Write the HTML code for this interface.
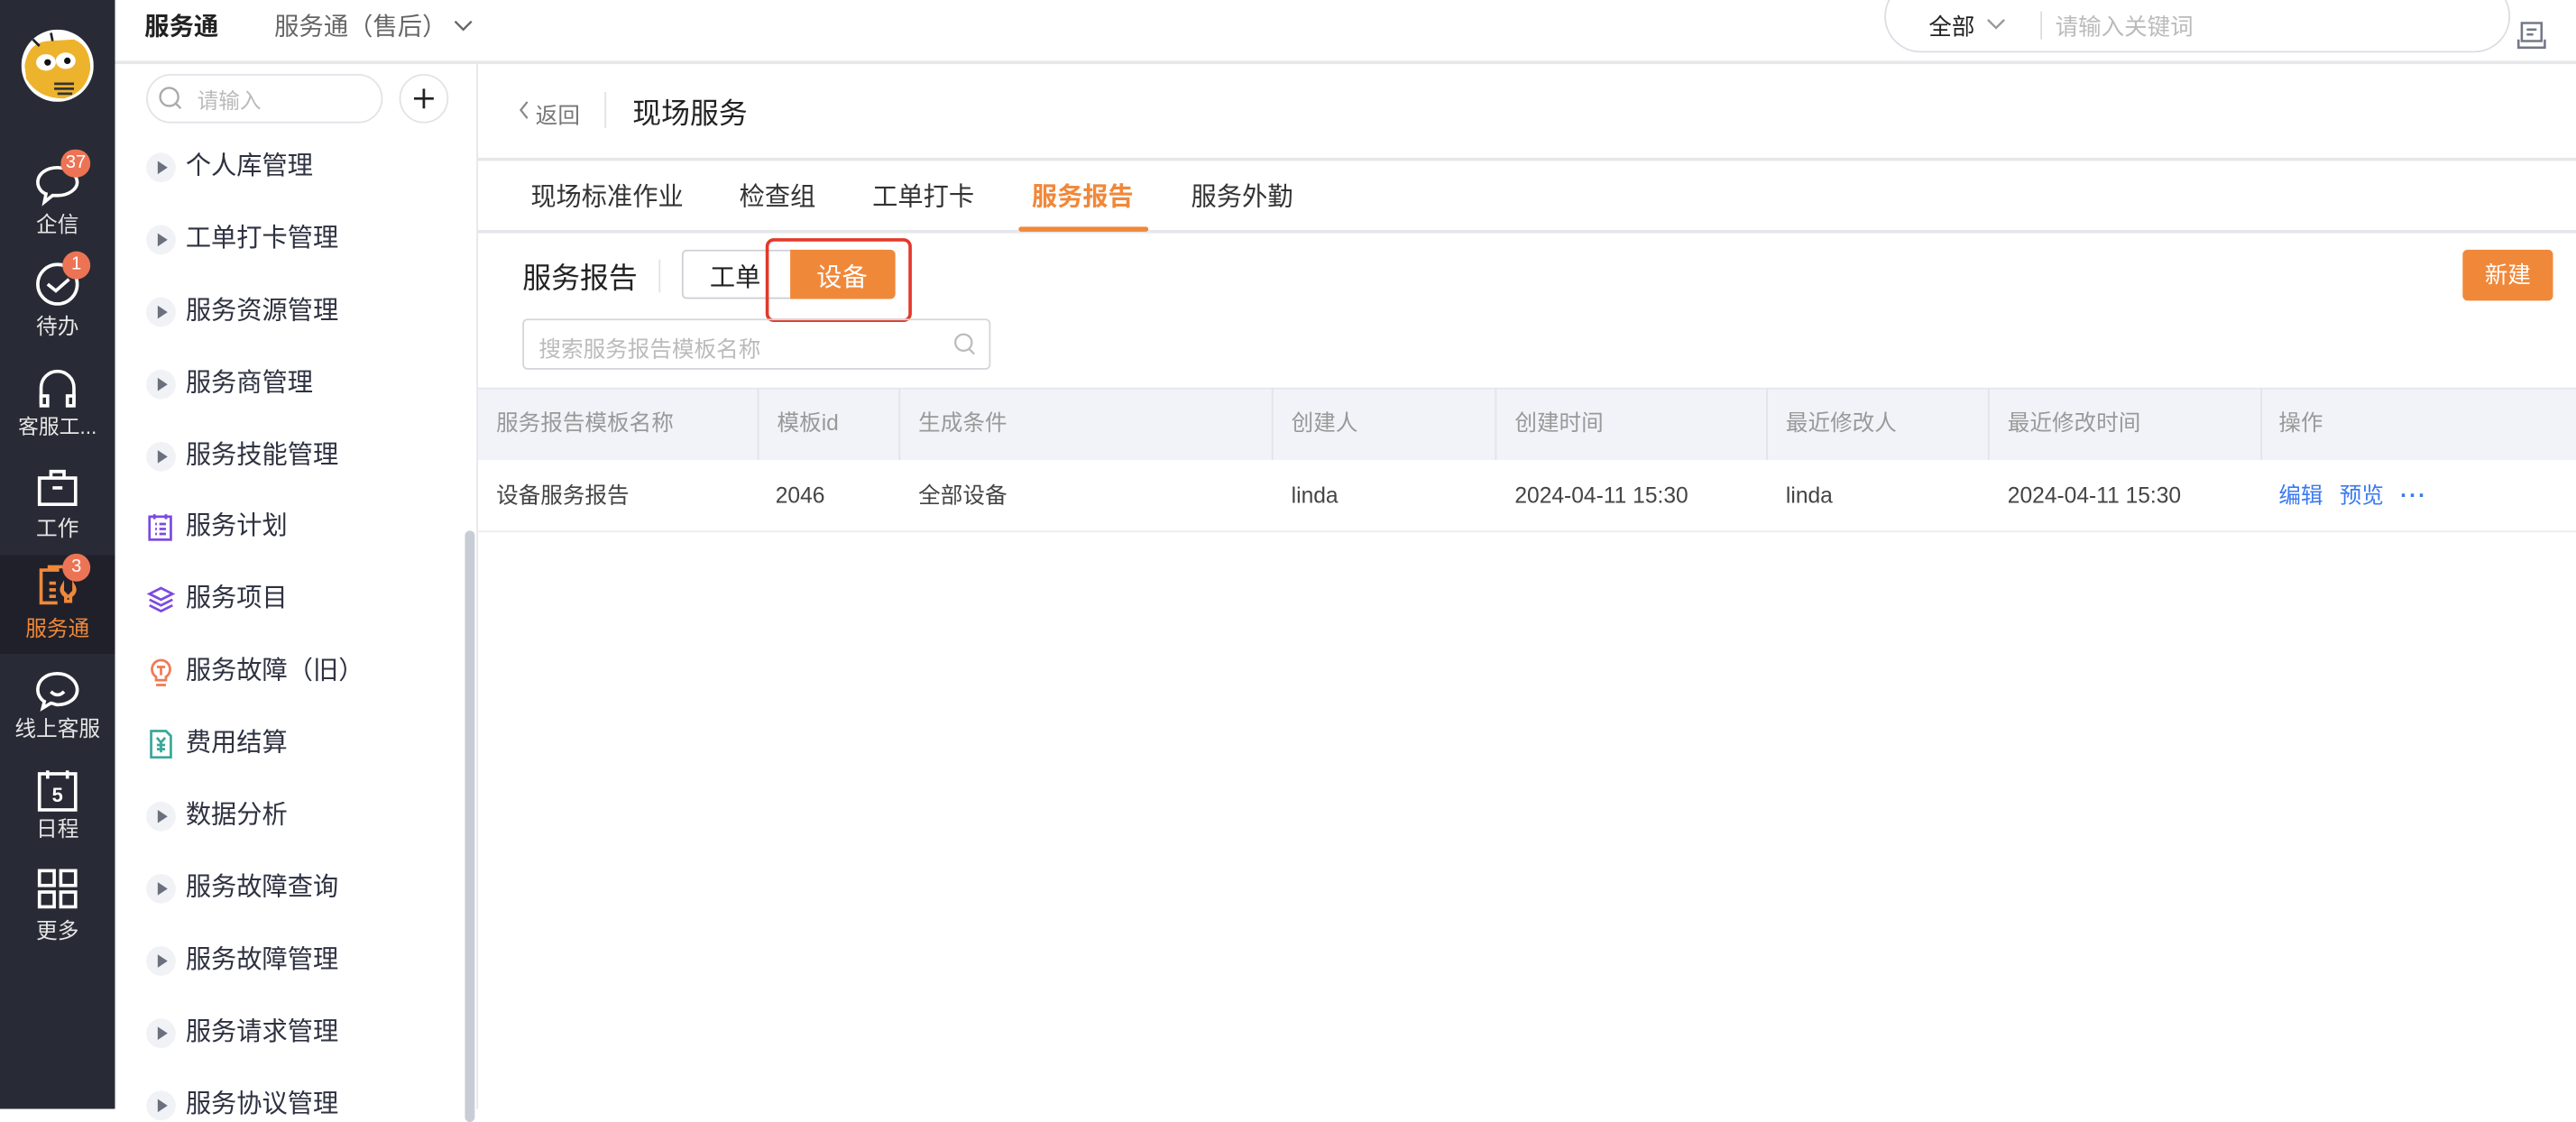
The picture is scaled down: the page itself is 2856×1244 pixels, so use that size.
<!DOCTYPE html>
<html><head><meta charset="utf-8"><style>
*{margin:0;padding:0;box-sizing:border-box}
html,body{width:2856px;height:1228px;overflow:hidden;background:#fff}
#c{position:absolute;left:0;top:0;width:1568px;height:675px;transform:scale(1.82143);transform-origin:0 0;font-family:"Liberation Sans","Noto Sans CJK SC",sans-serif;color:#333}
.a{position:absolute;white-space:nowrap}
.nav{position:absolute;left:0;width:70px;text-align:center;color:#e6e6e6;font-size:13px}
.badge{position:absolute;background:#ec7455;color:#fff;font-size:11px;height:17px;line-height:17px;border-radius:9px;min-width:17px;padding:0 3px;text-align:center}
.mi{position:absolute;left:89px;font-size:15.5px;color:#2e3140;height:20px;line-height:20px}
.mi .t{position:absolute;left:24px;top:0;white-space:nowrap}
.dot{position:absolute;left:0;top:1px;width:18px;height:18px;border-radius:50%;background:#f1f2f6}
.dot:after{content:"";position:absolute;left:7px;top:5px;border-left:6px solid #6b6f7e;border-top:4px solid transparent;border-bottom:4px solid transparent}
.th,.td{position:absolute;font-size:13.5px;line-height:44px;height:44px;white-space:nowrap}
.th{color:#999;top:236px}
.td{color:#444;top:280px}
.vl{position:absolute;top:236px;height:44px;width:1px;background:#e2e4ea}
</style></head><body><div id="c">
<!-- dark sidebar -->
<div class="a" style="left:0;top:0;width:70px;height:675px;background:#282b35"></div>
<div class="a" style="left:0;top:338px;width:70px;height:60px;background:#1f2029"></div>
<svg class="a" style="left:13px;top:18px" width="44" height="44" viewBox="0 0 44 44">
<circle cx="22" cy="22" r="22" fill="#fff"/>
<path d="M2 22 Q4 8 16 7 L32 6 Q42 10 42 24 Q40 38 26 42 Q10 42 3 30Z" fill="#eeb32d"/>
<ellipse cx="15" cy="20" rx="6" ry="5" fill="#fff"/><ellipse cx="27" cy="19" rx="6" ry="5" fill="#fff"/>
<circle cx="16" cy="20" r="2" fill="#111"/><circle cx="28" cy="19" r="2" fill="#111"/>
<path d="M20 33h12M20 36h12M22 39h9" stroke="#333" stroke-width="1.5"/>
<path d="M19 7 L18 2 M11 10 L7 6" stroke="#222" stroke-width="1.5"/>
</svg>
<svg class="a" style="left:21px;top:99px" width="28" height="28" viewBox="0 0 28 28" fill="none" stroke="#fff" stroke-width="2"><path d="M14 3C7 3 2 7 2 12c0 3 2 6 5 7l-1 5 5-4c1 0 2 0 3 0 7 0 12-4 12-8S21 3 14 3z"/></svg>
<div class="badge" style="left:37px;top:91px">37</div>
<div class="nav" style="top:126px">企信</div>
<svg class="a" style="left:21px;top:159px" width="28" height="28" viewBox="0 0 28 28" fill="none" stroke="#fff" stroke-width="2"><circle cx="14" cy="14" r="12"/><path d="M8 14l5 4 8-7"/></svg>
<div class="badge" style="left:38px;top:153px">1</div>
<div class="nav" style="top:188px">待办</div>
<svg class="a" style="left:21px;top:222px" width="28" height="28" viewBox="0 0 28 28" fill="none" stroke="#fff" stroke-width="2"><path d="M4 24V14a10 10 0 0 1 20 0v10"/><rect x="4" y="19" width="4" height="6" fill="none"/><rect x="20" y="19" width="4" height="6"/></svg>
<div class="nav" style="top:249px;font-size:12.5px">客服工...</div>
<svg class="a" style="left:21px;top:283px" width="28" height="28" viewBox="0 0 28 28" fill="none" stroke="#fff" stroke-width="2"><rect x="3" y="8" width="22" height="16"/><path d="M10 8V4h8v4M11 14h6"/></svg>
<div class="nav" style="top:311px">工作</div>
<svg class="a" style="left:21px;top:343px" width="28" height="28" viewBox="0 0 28 28" fill="none" stroke="#f0883a" stroke-width="2"><path d="M15 4H4v20h10M9 4V2h10v4M9 12h4M9 16h4M9 20h4"/><path d="M17 14a4 4 0 1 0 7 0v3l-2 2v4h-3v-4l-2-2z"/></svg>
<div class="badge" style="left:38px;top:337px">3</div>
<div class="nav" style="top:372px;color:#f0883a">服务通</div>
<svg class="a" style="left:21px;top:407px" width="28" height="28" viewBox="0 0 28 28" fill="none" stroke="#fff" stroke-width="2"><path d="M14 3C7 3 2 7 2 13c0 3 2 6 4 7l-1 4 5-3c1 0 3 1 4 1 7 0 12-4 12-9S21 3 14 3z"/><path d="M10 14q4 4 8 0"/></svg>
<div class="nav" style="top:433px">线上客服</div>
<svg class="a" style="left:21px;top:467px" width="28" height="28" viewBox="0 0 28 28" fill="none" stroke="#fff" stroke-width="2"><path d="M3 4h22v22H3z M8 2v5M20 2v5"/><text x="14" y="21" text-anchor="middle" font-size="12" font-weight="bold" fill="#fff" stroke="none" font-family="Liberation Sans">5</text></svg>
<div class="nav" style="top:494px">日程</div>
<svg class="a" style="left:22px;top:528px" width="26" height="26" viewBox="0 0 26 26" fill="none" stroke="#fff" stroke-width="2"><rect x="2" y="2" width="9" height="9"/><rect x="15" y="2" width="9" height="9"/><rect x="2" y="15" width="9" height="9"/><rect x="15" y="15" width="9" height="9"/></svg>
<div class="nav" style="top:556px">更多</div>

<!-- top bar -->
<div class="a" style="left:70px;top:37px;width:1498px;height:2px;background:#e6e7ea"></div>
<div class="a" style="left:88px;top:5px;font-size:15px;font-weight:bold;color:#222">服务通</div>
<div class="a" style="left:167px;top:5px;font-size:15px;color:#666">服务通（售后）</div>
<svg class="a" style="left:275px;top:11px" width="14" height="10" viewBox="0 0 14 10" fill="none" stroke="#666" stroke-width="1.3"><path d="M2 2l5 5 5-5"/></svg>
<div class="a" style="left:1147px;top:-12px;width:381px;height:44px;border:1.5px solid #dcdde3;border-radius:22px"></div>
<div class="a" style="left:1174px;top:6px;font-size:14px;color:#222">全部</div>
<svg class="a" style="left:1208px;top:10px" width="14" height="10" viewBox="0 0 14 10" fill="none" stroke="#999" stroke-width="1.3"><path d="M2 2l5 5 5-5"/></svg>
<div class="a" style="left:1242px;top:7px;width:1px;height:17px;background:#ddd"></div>
<div class="a" style="left:1251px;top:6px;font-size:14px;color:#bbb">请输入关键词</div>
<svg class="a" style="left:1532px;top:12px" width="18" height="18" viewBox="0 0 18 18" fill="none" stroke="#737887" stroke-width="1.4"><path d="M3 2h12v11H3zM1 12v5h16v-5M6 6h6M6 9h4"/></svg>

<!-- second sidebar -->
<div class="a" style="left:290px;top:38px;width:1px;height:637px;background:#e6e7ea"></div>
<div class="a" style="left:89px;top:45px;width:144px;height:30px;border:1.5px solid #e2e3e8;border-radius:15px"></div>
<svg class="a" style="left:96px;top:52px" width="16" height="16" viewBox="0 0 16 16" fill="none" stroke="#aaa" stroke-width="1.3"><circle cx="7" cy="7" r="5.5"/><path d="M11 11l3 3"/></svg>
<div class="a" style="left:120px;top:51px;font-size:13px;color:#bbb">请输入</div>
<div class="a" style="left:243px;top:45px;width:30px;height:30px;border:1.5px solid #e2e3e8;border-radius:50%"></div>
<svg class="a" style="left:250px;top:52px" width="16" height="16" viewBox="0 0 16 16" stroke="#222" stroke-width="1.5"><path d="M8 2v12M2 8h12"/></svg>
<div class="a" style="left:283px;top:323px;width:6px;height:360px;background:#c8cdd5;border-radius:3px"></div>

<div class="mi" style="top:92px"><span class="dot"></span><span class="t">个人库管理</span></div>
<div class="mi" style="top:136px"><span class="dot"></span><span class="t">工单打卡管理</span></div>
<div class="mi" style="top:180px"><span class="dot"></span><span class="t">服务资源管理</span></div>
<div class="mi" style="top:224px"><span class="dot"></span><span class="t">服务商管理</span></div>
<div class="mi" style="top:268px"><span class="dot"></span><span class="t">服务技能管理</span></div>
<div class="mi" style="top:311px"><svg class="a" style="left:0;top:1px" width="18" height="18" viewBox="0 0 18 18" fill="none" stroke="#7b4ae2" stroke-width="1.5"><rect x="2" y="2.5" width="13" height="14"/><path d="M5 1v3M12 1v3M5.5 7h1M8 7h4M5.5 10h1M8 10h4M5.5 13h1M8 13h4"/></svg><span class="t">服务计划</span></div>
<div class="mi" style="top:355px"><svg class="a" style="left:0;top:1px" width="18" height="18" viewBox="0 0 18 18" fill="none" stroke="#7b4ae2" stroke-width="1.5"><path d="M9 2l7 3.5-7 3.5-7-3.5z"/><path d="M2 9l7 3.5 7-3.5M2 12.5l7 3.5 7-3.5"/></svg><span class="t">服务项目</span></div>
<div class="mi" style="top:399px"><svg class="a" style="left:0;top:1px" width="18" height="18" viewBox="0 0 18 18" fill="none" stroke="#ef7a55" stroke-width="1.5"><path d="M6 12a5.5 5.5 0 1 1 6 0v2H6z"/><path d="M6 17h6M6.5 6h5M9 6v5"/></svg><span class="t">服务故障（旧）</span></div>
<div class="mi" style="top:443px"><svg class="a" style="left:0;top:1px" width="18" height="18" viewBox="0 0 18 18" fill="none" stroke="#3aa898" stroke-width="1.5"><path d="M3 1h9l3 3v13H3z"/><path d="M6.5 5l2.5 3 2.5-3M9 8v6M6.5 9.5h5M6.5 12h5"/></svg><span class="t">费用结算</span></div>
<div class="mi" style="top:487px"><span class="dot"></span><span class="t">数据分析</span></div>
<div class="mi" style="top:531px"><span class="dot"></span><span class="t">服务故障查询</span></div>
<div class="mi" style="top:575px"><span class="dot"></span><span class="t">服务故障管理</span></div>
<div class="mi" style="top:619px"><span class="dot"></span><span class="t">服务请求管理</span></div>
<div class="mi" style="top:663px"><span class="dot"></span><span class="t">服务协议管理</span></div>

<!-- main -->
<svg class="a" style="left:315px;top:61px" width="8" height="12" viewBox="0 0 8 12" fill="none" stroke="#888" stroke-width="1.2"><path d="M6 1L2 6l4 5"/></svg>
<div class="a" style="left:326px;top:59px;font-size:13.5px;color:#777">返回</div>
<div class="a" style="left:368px;top:56px;width:1px;height:22px;background:#e3e3e3"></div>
<div class="a" style="left:385px;top:56px;font-size:17.5px;color:#222">现场服务</div>
<div class="a" style="left:291px;top:96px;width:1277px;height:2px;background:#e6e7ea"></div>
<div class="a" style="left:323px;top:108px;font-size:15.5px;color:#333">现场标准作业</div>
<div class="a" style="left:450px;top:108px;font-size:15.5px;color:#333">检查组</div>
<div class="a" style="left:531px;top:108px;font-size:15.5px;color:#333">工单打卡</div>
<div class="a" style="left:628px;top:108px;font-size:15.5px;color:#f0883a;font-weight:bold">服务报告</div>
<div class="a" style="left:725px;top:108px;font-size:15.5px;color:#333">服务外勤</div>
<div class="a" style="left:291px;top:140px;width:1277px;height:2px;background:#e6e7ea"></div>
<div class="a" style="left:620px;top:138px;width:79px;height:3px;background:#f0883a;border-radius:2px"></div>

<div class="a" style="left:318px;top:156px;font-size:17.5px;color:#222">服务报告</div>
<div class="a" style="left:401px;top:158px;width:1px;height:20px;background:#e3e3e3"></div>
<div class="a" style="left:415px;top:152px;width:70px;height:30px;border:1.5px solid #cfd0d6;border-radius:3px"></div>
<div class="a" style="left:432px;top:157px;font-size:15.5px;color:#222">工单</div>
<div class="a" style="left:481px;top:152px;width:64px;height:30px;background:#f0883a;border-radius:0 3px 3px 0"></div>
<div class="a" style="left:497px;top:157px;font-size:15.5px;color:#fff">设备</div>
<div class="a" style="left:466px;top:145px;width:89px;height:51px;border:2.5px solid #e2392a;border-radius:5px"></div>
<div class="a" style="left:1499px;top:152px;width:55px;height:31px;background:#f0883a;border-radius:3px;color:#fff;font-size:14px;text-align:center;line-height:31px">新建</div>
<div class="a" style="left:318px;top:194px;width:285px;height:31px;border:1.5px solid #d5d6dc;border-radius:3px"></div>
<div class="a" style="left:328px;top:201px;font-size:13.5px;color:#bbb">搜索服务报告模板名称</div>
<svg class="a" style="left:580px;top:202px" width="14" height="15" viewBox="0 0 14 15" fill="none" stroke="#bbb" stroke-width="1.2"><circle cx="6.5" cy="6.5" r="5"/><path d="M10 10.5l3 3"/></svg>

<!-- table -->
<div class="a" style="left:291px;top:236px;width:1277px;height:44px;background:#f2f3f8;border-top:1px solid #e6e7ec"></div>
<div class="a" style="left:291px;top:323px;width:1277px;height:1px;background:#ebecf0"></div>
<div class="vl" style="left:461px"></div><div class="vl" style="left:547px"></div><div class="vl" style="left:774px"></div><div class="vl" style="left:910px"></div><div class="vl" style="left:1075px"></div><div class="vl" style="left:1210px"></div><div class="vl" style="left:1376px"></div>
<div class="th" style="left:302px">服务报告模板名称</div>
<div class="th" style="left:473px">模板id</div>
<div class="th" style="left:559px">生成条件</div>
<div class="th" style="left:786px">创建人</div>
<div class="th" style="left:922px">创建时间</div>
<div class="th" style="left:1087px">最近修改人</div>
<div class="th" style="left:1222px">最近修改时间</div>
<div class="th" style="left:1387px">操作</div>
<div class="td" style="left:302px">设备服务报告</div>
<div class="td" style="left:472px">2046</div>
<div class="td" style="left:559px">全部设备</div>
<div class="td" style="left:786px">linda</div>
<div class="td" style="left:922px">2024-04-11 15:30</div>
<div class="td" style="left:1087px">linda</div>
<div class="td" style="left:1222px">2024-04-11 15:30</div>
<div class="td" style="left:1387px;color:#3a7af0">编辑</div>
<div class="td" style="left:1424px;color:#3a7af0">预览</div>
<div class="td" style="left:1461px;color:#3a7af0;font-weight:bold;letter-spacing:1px">···</div>
</div></body></html>
